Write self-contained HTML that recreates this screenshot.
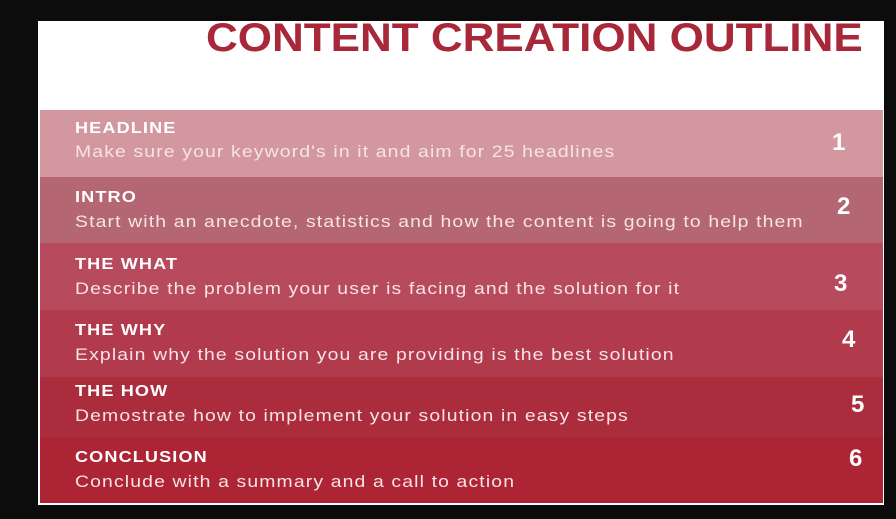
<!DOCTYPE html><html><head><style>
body{margin:0;width:896px;height:519px;background:#0c0c0c;position:relative;overflow:hidden;font-family:"Liberation Sans",sans-serif}
.panel{position:absolute;left:38px;top:21px;width:846px;height:484px;background:#fff}
.title{position:absolute;left:206px;top:18px;font-size:40px;font-weight:bold;color:#a8283a;line-height:40px;white-space:nowrap;transform:scaleX(1.1);transform-origin:left}
.row{position:absolute;left:40px;width:843px;color:#fff}
.row b{position:absolute;left:35px;font-size:16px;letter-spacing:1px;transform:scaleX(1.13);transform-origin:left;white-space:nowrap}
.row span{position:absolute;left:35px;font-size:17px;letter-spacing:1px;color:#f6e4e6;transform:scaleX(1.14);transform-origin:left;white-space:nowrap}
.row i{position:absolute;font-style:normal;font-weight:bold;font-size:24px}
</style></head><body>
<div class="panel"></div>
<div class="title">CONTENT CREATION OUTLINE</div>
<div class="row" style="top:110px;height:67px;background:#d3979f"><b style="top:10px">HEADLINE</b><span style="top:32px">Make sure your keyword's in it and aim for 25 headlines</span><i style="left:792px;top:19px">1</i></div>
<div class="row" style="top:177px;height:66px;background:#b46672"><b style="top:12px">INTRO</b><span style="top:35px">Start with an anecdote, statistics and how the content is going to help them</span><i style="left:797px;top:16px">2</i></div>
<div class="row" style="top:243px;height:67px;background:#b84a5e"><b style="top:13px">THE WHAT</b><span style="top:36px">Describe the problem your user is facing and the solution for it</span><i style="left:794px;top:27px">3</i></div>
<div class="row" style="top:310px;height:67px;background:#b13a4c"><b style="top:12px">THE WHY</b><span style="top:35px">Explain why the solution you are providing is the best solution</span><i style="left:802px;top:16px">4</i></div>
<div class="row" style="top:377px;height:60px;background:#ab2c3d"><b style="top:6px">THE HOW</b><span style="top:29px">Demostrate how to implement your solution in easy steps</span><i style="left:811px;top:14px">5</i></div>
<div class="row" style="top:437px;height:66px;background:#ad2435"><b style="top:12px">CONCLUSION</b><span style="top:35px">Conclude with a summary and a call to action</span><i style="left:809px;top:8px">6</i></div>
</body></html>
